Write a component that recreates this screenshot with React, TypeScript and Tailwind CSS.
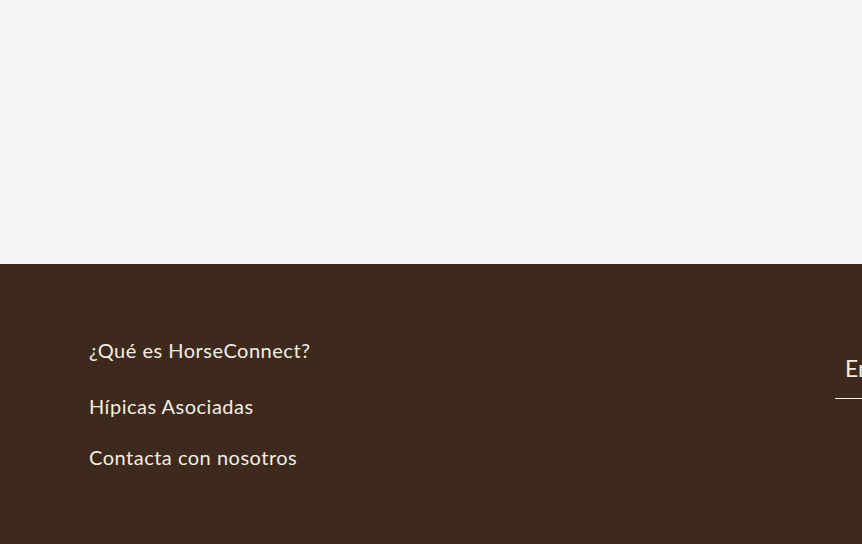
export default function App() {
  const links = [
    { label: "¿Qué es HorseConnect?", cls: "mt-[74px]" },
    { label: "Hípicas Asociadas", cls: "mt-[32px]" },
    { label: "Contacta con nosotros", cls: "mt-[27px]" },
  ];

  return (
    <div className="w-full overflow-hidden font-['Lato',sans-serif]">
      <div className="h-[264px] bg-[#f5f5f5]" />
      <footer className="h-[280px] bg-[#3d2a1c] flex overflow-hidden">
        <nav className="flex flex-col pl-[89px]">
          {links.map((l) => (
            <a
              key={l.label}
              href="#"
              className={`${l.cls} text-[20px] leading-[24px] tracking-[0.5px] text-[#f4ede3] whitespace-nowrap`}
            >
              {l.label}
            </a>
          ))}
        </nav>
        <div className="ml-auto -mr-[273px] w-[300px] pt-[89px]">
          <div className="border-b border-[#f4ede3] pb-[15px] pl-[10px]">
            <input
              type="email"
              placeholder="Email"
              className="w-full bg-transparent text-[23px] leading-[30px] text-[#f4ede3] placeholder:text-[#f4ede3] outline-none"
            />
          </div>
        </div>
      </footer>
    </div>
  );
}
